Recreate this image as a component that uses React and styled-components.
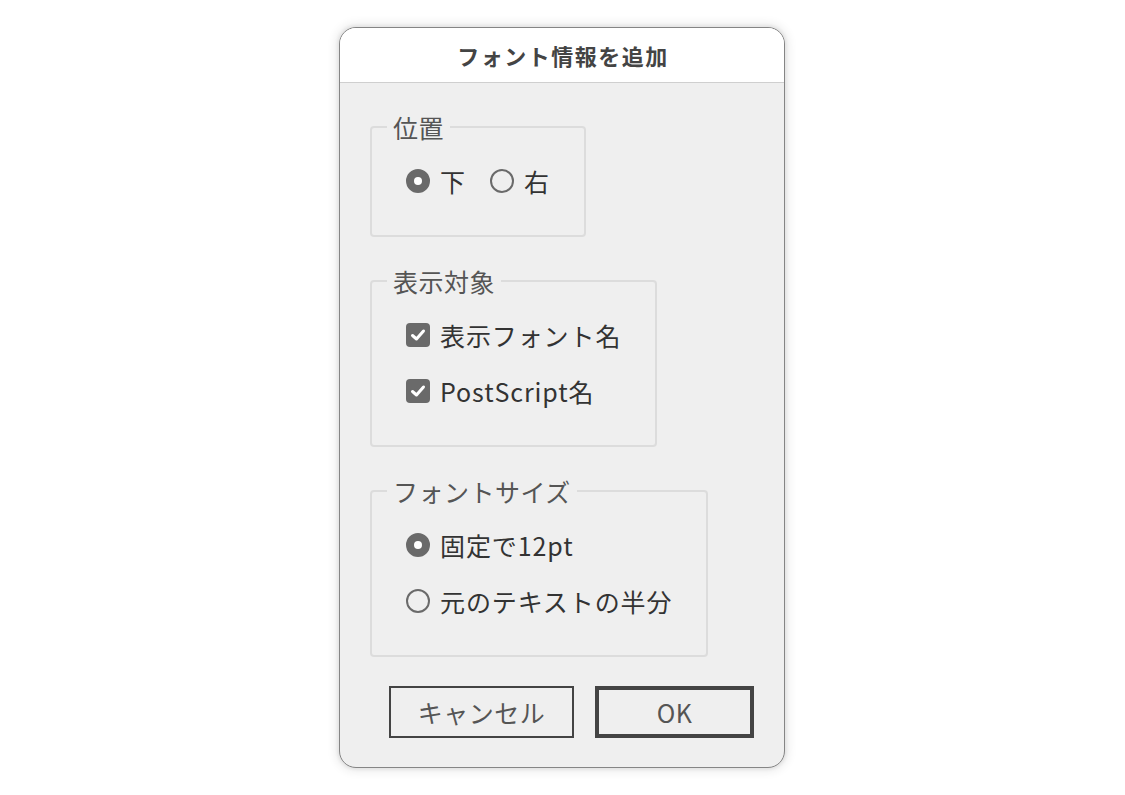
import React from "react";
import styled, { createGlobalStyle } from "styled-components";

const Global = createGlobalStyle`
  html, body { margin: 0; padding: 0; background: #ffffff; }
  body { font-family: "Noto Sans CJK JP", "Noto Sans", sans-serif; }
  * { box-sizing: border-box; }
`;

const Page = styled.div`
  height: 100vh;
  display: flex;
  align-items: center;
  justify-content: center;
`;

const Dialog = styled.div`
  width: 446px;
  height: 741px;
  margin-left: -1px;
  margin-top: -1px;
  border: 1px solid #858585;
  border-radius: 17px;
  background: #efefef;
  box-shadow: 0 0 3px 2px rgba(0, 0, 0, 0.06), 0 0 10px 4px rgba(0, 0, 0, 0.07);
  overflow: hidden;
  display: flex;
  flex-direction: column;
`;

const Header = styled.div`
  height: 55px;
  flex: none;
  background: #ffffff;
  border-bottom: 1px solid #cfcfcf;
  display: flex;
  align-items: center;
  justify-content: center;
  font-size: 22px;
  font-weight: 700;
  color: #444;
  letter-spacing: 1.5px;
  padding-left: 2px;
`;

const Body = styled.div`
  flex: 1;
  padding: 29px 30px 28px 30px;
  display: flex;
  flex-direction: column;
  align-items: flex-start;
  gap: 29px;
`;

const Group = styled.fieldset`
  margin: 0;
  width: max-content;
  border: 2px solid #dcdcdc;
  border-radius: 4px;
  padding: 24px 34px 39px 34px;
  display: flex;
  flex-direction: ${(p) => (p.$row ? "row" : "column")};
  gap: ${(p) => (p.$row ? "24px" : "26px")};
`;

const Legend = styled.legend`
  margin-left: -19px;
  padding: 0 6px;
  font-size: 25px;
  line-height: 30px;
  color: #555;
  letter-spacing: 0.5px;
`;

const Option = styled.label`
  display: flex;
  align-items: center;
  gap: 10px;
  font-size: 25px;
  line-height: 30px;
  color: #333;
  letter-spacing: 0.9px;
  cursor: default;
`;

const RadioMark = styled.span`
  width: 24px;
  height: 24px;
  flex: none;
  border-radius: 50%;
  border: 2px solid #6a6a6a;
  background: ${(p) => (p.$on ? "#6a6a6a" : "transparent")};
  display: flex;
  align-items: center;
  justify-content: center;
  &::after {
    content: "";
    width: 8px;
    height: 8px;
    border-radius: 50%;
    background: #ffffff;
    display: ${(p) => (p.$on ? "block" : "none")};
  }
`;

const CheckMark = styled.span`
  width: 24px;
  height: 24px;
  flex: none;
  border-radius: 4px;
  background: #6a6a6a;
  display: flex;
  align-items: center;
  justify-content: center;
`;

const Buttons = styled.div`
  align-self: stretch;
  display: flex;
  justify-content: flex-end;
  gap: 21px;
`;

const Button = styled.button`
  width: ${(p) => p.$w}px;
  height: 52px;
  background: transparent;
  border: ${(p) => (p.$primary ? "4px" : "2px")} solid #444;
  border-radius: 0;
  font-family: inherit;
  font-size: 25px;
  letter-spacing: 0.5px;
  color: #555;
  padding: 0;
  display: flex;
  align-items: center;
  justify-content: center;
`;

function Radio({ on, children }) {
  return (
    <Option>
      <RadioMark $on={on} />
      {children}
    </Option>
  );
}

function Check({ children }) {
  return (
    <Option>
      <CheckMark>
        <svg width="18" height="18" viewBox="0 0 18 18">
          <path d="M3.5 9.5 L7.5 13 L14.5 5" fill="none" stroke="#fff" strokeWidth="3" strokeLinecap="round" strokeLinejoin="round" />
        </svg>
      </CheckMark>
      {children}
    </Option>
  );
}

export default function App() {
  return (
    <Page>
      <Global />
      <Dialog>
        <Header>フォント情報を追加</Header>
        <Body>
          <Group $row>
            <Legend>位置</Legend>
            <Radio on>下</Radio>
            <Radio>右</Radio>
          </Group>
          <Group>
            <Legend>表示対象</Legend>
            <Check>表示フォント名</Check>
            <Check>PostScript名</Check>
          </Group>
          <Group>
            <Legend>フォントサイズ</Legend>
            <Radio on>固定で12pt</Radio>
            <Radio>元のテキストの半分</Radio>
          </Group>
          <Buttons>
            <Button $w={185}>キャンセル</Button>
            <Button $w={159} $primary>OK</Button>
          </Buttons>
        </Body>
      </Dialog>
    </Page>
  );
}
